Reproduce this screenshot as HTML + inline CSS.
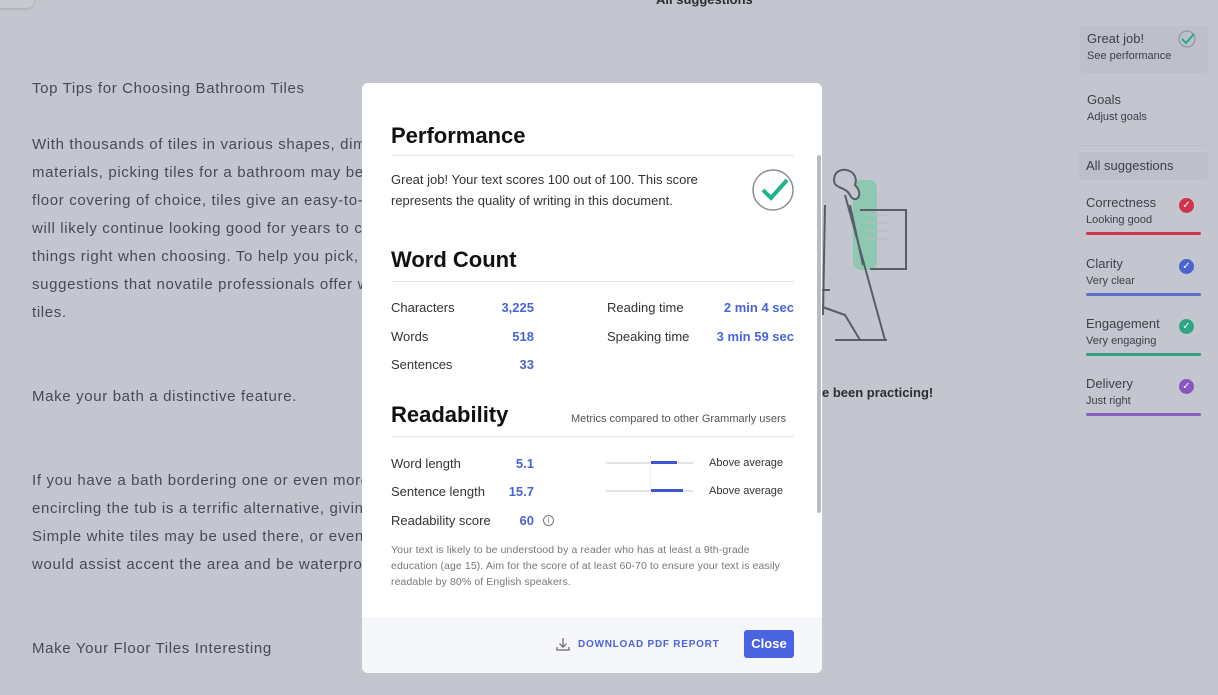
<!DOCTYPE html>
<html><head><meta charset="utf-8"><style>
*{margin:0;padding:0;box-sizing:border-box}
body{width:1218px;height:695px;overflow:hidden;background:#c4c6cf;font-family:"Liberation Sans",sans-serif;position:relative;color:#4a4d57}
.a{position:absolute;white-space:nowrap}
.doc{font-size:15px;letter-spacing:0.65px;color:#474a54}
.modal{position:absolute;left:362px;top:83px;width:460px;height:590px;background:#fff;border-radius:6px;overflow:hidden;color:#1f2129}
h2{position:absolute;font-size:22px;font-weight:bold;color:#111;left:29px}
.hr{position:absolute;left:29px;width:403px;height:1px;background:#e4e6eb}
.t{font-size:13px;color:#333}
.v{font-size:13px;font-weight:bold;color:#4a64d6;text-align:right}
.foot{position:absolute;left:0;top:534px;width:460px;height:56px;background:#f6f7fb}
.side .a{color:#3c3f48}
.ti{font-size:13px}
.su{font-size:11px;color:#6c6f79}
.dot{position:absolute;width:15px;height:15px;border-radius:50%;color:#fff;font-size:10px;text-align:center;line-height:15px}
.bar{position:absolute;left:1086px;width:115px;height:3px;border-radius:2px}
</style></head><body>
<div class="a" style="left:-10px;top:-20px;width:44px;height:28px;background:#c8cad2;border-radius:8px;box-shadow:0 1px 3px rgba(0,0,0,.15)"></div>
<div class="a" style="left:656px;top:-8px;font-size:13px;font-weight:bold;color:#2b2d35">All suggestions</div>
<div class="doc">
<div class="a" style="left:32px;top:80px">Top Tips for Choosing Bathroom Tiles</div>
<div class="a" style="left:32px;top:136px">With thousands of tiles in various shapes, dimensions,</div>
<div class="a" style="left:32px;top:164px">materials, picking tiles for a bathroom may be</div>
<div class="a" style="left:32px;top:192px">floor covering of choice, tiles give an easy-to-clean</div>
<div class="a" style="left:32px;top:220px">will likely continue looking good for years to come</div>
<div class="a" style="left:32px;top:248px">things right when choosing. To help you pick,</div>
<div class="a" style="left:32px;top:276px">suggestions that novatile professionals offer when</div>
<div class="a" style="left:32px;top:304px">tiles.</div>
<div class="a" style="left:32px;top:388px">Make your bath a distinctive feature.</div>
<div class="a" style="left:32px;top:472px">If you have a bath bordering one or even more</div>
<div class="a" style="left:32px;top:500px">encircling the tub is a terrific alternative, giving</div>
<div class="a" style="left:32px;top:528px">Simple white tiles may be used there, or even</div>
<div class="a" style="left:32px;top:556px">would assist accent the area and be waterproof</div>
<div class="a" style="left:32px;top:640px">Make Your Floor Tiles Interesting</div>
</div>
<svg class="a" style="left:815px;top:165px" width="100" height="185" viewBox="0 0 100 185" fill="none" stroke="#5a5d68" stroke-width="2">
<rect x="38" y="15" width="24" height="90" rx="8" fill="#8fc8b2" stroke="none"/>
<path d="M45 45 H91 V104 H55"/>
<path d="M52 50h20M52 58h20M52 66h20M52 74h20" stroke="#b8bbc4" stroke-width="1.5"/>
<path d="M20 10 C25 0 45 5 40 20 C50 30 40 40 35 30 C30 20 15 25 20 10Z" fill="#c4c6cf"/>
<path d="M10 40 L8 150 M2 140 L30 150 L45 175 M35 40 L48 100 M30 30 L70 175 M20 175 H72 M0 125 H15"/>
</svg>
<div class="a" style="left:822px;top:385px;font-size:13px;font-weight:bold;color:#2b2d35">e been practicing!</div>
<div class="side">
<div class="a" style="left:1080px;top:26px;width:128px;height:47px;background:#bdc0ca;border-radius:4px"></div>
<div class="a ti" style="left:1087px;top:31px">Great job!</div>
<div class="a su" style="left:1087px;top:50px">See performance</div>
<svg class="a" style="left:1177px;top:29px" width="20" height="20"><circle cx="10" cy="10" r="8" fill="none" stroke="#8a8d97" stroke-width="1"/><path d="M5 10l4 4 8-9" stroke="#2aa889" stroke-width="2" fill="none"/></svg>
<div class="a ti" style="left:1087px;top:92px">Goals</div>
<div class="a su" style="left:1087px;top:111px">Adjust goals</div>
<div class="a" style="left:1078px;top:145px;width:128px;height:1px;background:#babdc7"></div>
<div class="a" style="left:1078px;top:152px;width:130px;height:28px;background:#bdc0ca;border-radius:4px"></div>
<div class="a ti" style="left:1086px;top:158px">All suggestions</div>
<div class="a ti" style="left:1086px;top:195px">Correctness</div><div class="a su" style="left:1086px;top:214px">Looking good</div>
<div class="dot" style="left:1179px;top:198px;background:#d0344c">✓</div><div class="bar" style="top:232px;background:#d0344c"></div>
<div class="a ti" style="left:1086px;top:256px">Clarity</div><div class="a su" style="left:1086px;top:275px">Very clear</div>
<div class="dot" style="left:1179px;top:259px;background:#4a64d0">✓</div><div class="bar" style="top:293px;background:#5a6fc8"></div>
<div class="a ti" style="left:1086px;top:316px">Engagement</div><div class="a su" style="left:1086px;top:335px">Very engaging</div>
<div class="dot" style="left:1179px;top:319px;background:#2fa585">✓</div><div class="bar" style="top:353px;background:#3a9e84"></div>
<div class="a ti" style="left:1086px;top:376px">Delivery</div><div class="a su" style="left:1086px;top:395px">Just right</div>
<div class="dot" style="left:1179px;top:379px;background:#8a55c0">✓</div><div class="bar" style="top:413px;background:#8a5dc0"></div>
</div>

<div class="modal">
<div class="a" style="left:455px;top:72px;width:4px;height:358px;background:#b9bcc4;border-radius:2px"></div>
<h2 style="top:40px">Performance</h2>
<div class="hr" style="top:72px"></div>
<div class="a t" style="left:29px;top:89px">Great job! Your text scores 100 out of 100. This score</div>
<div class="a t" style="left:29px;top:110px">represents the quality of writing in this document.</div>
<svg class="a" style="left:389px;top:84px" width="46" height="46"><circle cx="22" cy="23" r="20" fill="none" stroke="#8a8d97" stroke-width="1.5"/><path d="M12 23l8 8 16-18" stroke="#1fb58a" stroke-width="4" fill="none"/></svg>
<h2 style="top:164px">Word Count</h2>
<div class="hr" style="top:198px"></div>
<div class="a t" style="left:29px;top:217px">Characters</div><div class="a v" style="left:112px;width:60px;top:217px">3,225</div>
<div class="a t" style="left:29px;top:246px">Words</div><div class="a v" style="left:112px;width:60px;top:246px">518</div>
<div class="a t" style="left:29px;top:274px">Sentences</div><div class="a v" style="left:112px;width:60px;top:274px">33</div>
<div class="a t" style="left:245px;top:217px">Reading time</div><div class="a v" style="left:332px;width:100px;top:217px">2 min 4 sec</div>
<div class="a t" style="left:245px;top:246px">Speaking time</div><div class="a v" style="left:332px;width:100px;top:246px">3 min 59 sec</div>
<h2 style="top:319px">Readability</h2>
<div class="a" style="left:209px;top:330px;font-size:11px;color:#555">Metrics compared to other Grammarly users</div>
<div class="hr" style="top:353px"></div>
<div class="a t" style="left:29px;top:373px">Word length</div><div class="a v" style="left:112px;width:60px;top:373px">5.1</div>
<div class="a t" style="left:29px;top:401px">Sentence length</div><div class="a v" style="left:112px;width:60px;top:401px">15.7</div>
<div class="a t" style="left:29px;top:430px">Readability score</div><div class="a v" style="left:112px;width:60px;top:430px">60</div>
<div class="a" style="left:181px;top:432px;width:11px;height:11px;border:1px solid #777;border-radius:50%;font-size:8px;text-align:center;line-height:9px;color:#777">i</div>
<div class="a" style="left:244px;top:379px;width:87px;height:2px;background:#e2e4ea"></div>
<div class="a" style="left:288px;top:378px;width:27px;height:3px;background:#3c57d0"></div>
<div class="a" style="left:244px;top:407px;width:87px;height:2px;background:#e2e4ea"></div>
<div class="a" style="left:288px;top:406px;width:33px;height:3px;background:#3c57d0"></div>
<div class="a" style="left:288px;top:372px;width:1px;height:42px;background:#eceef2"></div>
<div class="a" style="left:347px;top:374px;font-size:11px;color:#333">Above average</div>
<div class="a" style="left:347px;top:402px;font-size:11px;color:#333">Above average</div>
<div class="a" style="left:29px;top:459px;font-size:10.5px;line-height:16px;color:#777;white-space:normal;width:402px;letter-spacing:0.1px">Your text is likely to be understood by a reader who has at least a 9th-grade education (age 15). Aim for the score of at least 60-70 to ensure your text is easily readable by 80% of English speakers.</div>
<div class="foot"></div>
<svg class="a" style="left:194px;top:554px" width="14" height="14" fill="none" stroke="#666" stroke-width="1.2"><path d="M7 1v9M3.5 6.5L7 10l3.5-3.5M1 10v3h12v-3"/></svg>
<div class="a" style="left:216px;top:556px;font-size:10px;font-weight:bold;letter-spacing:0.75px;color:#4a64d6">DOWNLOAD PDF REPORT</div>
<div class="a" style="left:382px;top:547px;width:50px;height:28px;background:#4a64e0;border-radius:3px;color:#fff;font-weight:bold;font-size:13px;text-align:center;line-height:28px">Close</div>
</div>
</body></html>
